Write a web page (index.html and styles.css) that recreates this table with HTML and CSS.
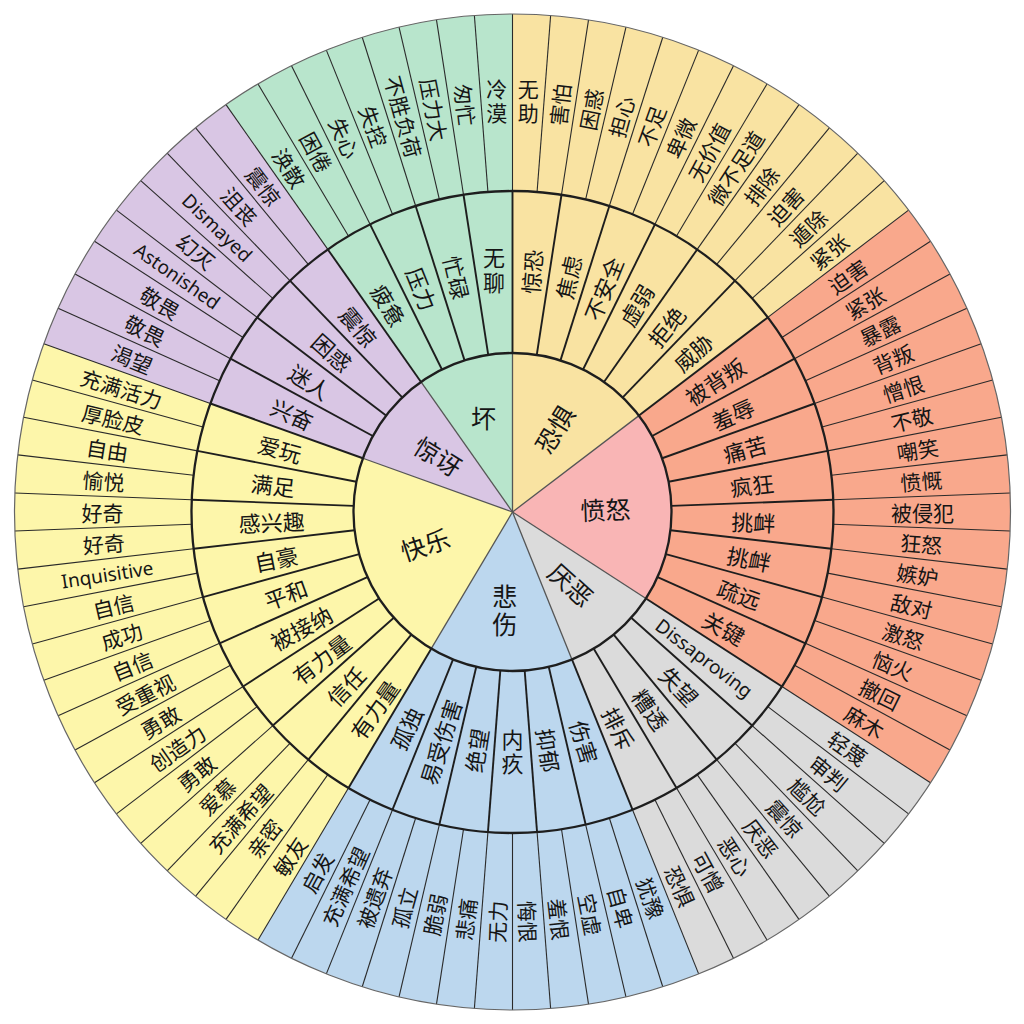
FILE: index.html
```html
<!DOCTYPE html>
<html lang="zh-CN">
<head>
<meta charset="utf-8">
<title>情绪轮</title>
<link rel="stylesheet" href="styles.css">
</head>
<body>
<main class="page">
  <svg id="wheel" class="wheel" viewBox="0 0 1024 1024" width="1024" height="1024" xmlns="http://www.w3.org/2000/svg">
    <g id="fills"></g>
    <g id="lines"></g>
    <g id="labels"></g>
  </svg>
</main>
<script src="script.js"></script>
</body>
</html>
```

FILE: styles.css
```css
html, body {
  margin: 0;
  padding: 0;
  background: #ffffff;
}
.page {
  width: 1024px;
  height: 1024px;
  display: block;
}
.wheel {
  display: block;
}
.c-fear { fill: #f9e3a2; }
.c-anger { fill: #f9a88c; }
.c-anger-core { fill: #f9b5b5; }
.c-disgust { fill: #dbdbdb; }
.c-sad { fill: #bcd7ee; }
.c-happy { fill: #fdf6aa; }
.c-surprise { fill: #d9c6e4; }
.c-bad { fill: #b8e5cc; }

.ln-outer { stroke: #2a2a2a; stroke-width: 1.1; }
.ln-mid { stroke: #1e1e1e; stroke-width: 1.9; }
.ln-core { stroke: #555; stroke-width: 1.3; }
.ring { fill: none; stroke: #1e1e1e; stroke-width: 2.3; }
.rim { fill: none; stroke: #666; stroke-width: 1.2; }

.lbl {
  font-family: "Noto Sans CJK SC", "Noto Sans", sans-serif;
  fill: #151515;
  text-anchor: middle;
  dominant-baseline: central;
}
.lbl-outer { font-size: 21px; }
.lbl-mid { font-size: 22px; }
.lbl-core { font-size: 25px; }
.latin {
  font-family: "Noto Sans", "Open Sans", sans-serif;
  font-size: 19px;
}
.vert {
  writing-mode: vertical-rl;
  text-orientation: upright;
  letter-spacing: 0.12em;
}
```

FILE: script.js
```js
(function () {
  var NS = 'http://www.w3.org/2000/svg';
  var cx = 512.5, cy = 512, R0 = 498, R1 = 321, R2 = 159, N = 82, SEG = 360 / N;

  var cores = [
    { name: '恐惧', cls: 'fear', n: 12, rot: -58,
      mid: ['惊恐', '焦虑', '不安全', '虚弱', '拒绝', '威胁'],
      outer: ['无助', '害怕', '困惑', '担心', '不足', '卑微', '无价值', '微不足道', '排除', '迫害', '遁除', '紧张'] },
    { name: '愤怒', cls: 'anger', core: 'anger-core', n: 16, rot: -2,
      mid: ['被背叛', '羞辱', '痛苦', '疯狂', '挑衅', '挑衅', '疏远', '关键'],
      outer: ['迫害', '紧张', '暴露', '背叛', '憎恨', '不敬', '嘲笑', '愤慨', '被侵犯', '狂怒', '嫉妒', '敌对', '激怒', '恼火', '撤回', '麻木'] },
    { name: '厌恶', cls: 'disgust', n: 8, rot: 42,
      mid: ['Dissaproving', '失望', '糟透', '排斥'],
      outer: ['轻蔑', '审判', '尴尬', '震惊', '厌恶', '恶心', '可憎', '恐惧'] },
    { name: '悲伤', cls: 'sad', n: 12, stack: true, r: 100,
      mid: ['伤害', '抑郁', '内疚', '绝望', '易受伤害', '孤独'],
      outer: ['犹豫', '自卑', '空虚', '羞恨', '悔恨', '无力', '悲痛', '脆弱', '孤立', '被遗弃', '充满希望', '启发'] },
    { name: '快乐', cls: 'happy', n: 18, rot: -18,
      mid: ['有力量', '信任', '有力量', '被接纳', '平和', '自豪', '感兴趣', '满足', '爱玩'],
      outer: ['敏友', '亲密', '充满希望', '爱慕', '勇敢', '创造力', '勇敢', '受重视', '自信', '成功', '自信', 'Inquisitive', '好奇', '好奇', '愉悦', '自由', '厚脸皮', '充满活力'] },
    { name: '惊讶', cls: 'surprise', n: 8, rot: 32,
      mid: ['兴奋', '迷人', '困惑', '震惊'],
      outer: ['渴望', '敬畏', '敬畏', 'Astonished', '幻灭', 'Dismayed', '沮丧', '震惊'] },
    { name: '坏', cls: 'bad', n: 8, stack: true, r: 96,
      mid: ['疲惫', '压力', '忙碌', '无聊'],
      outer: ['涣散', '困倦', '失心', '失控', '不胜负荷', '压力大', '匆忙', '冷漠'] }
  ];

  var STACK = { '冷漠': 1, '无助': 1, '无聊': 1, '内疚': 1 };

  function pt(r, a) {
    var t = a * Math.PI / 180;
    return [cx + r * Math.sin(t), cy - r * Math.cos(t)];
  }
  function f(v) { return v.toFixed(2); }
  function wedge(r1, r2, a1, a2) {
    var p1 = pt(r2, a1), p2 = pt(r2, a2);
    var large = (a2 - a1) > 180 ? 1 : 0;
    var d = 'M' + f(p1[0]) + ' ' + f(p1[1]) + 'A' + r2 + ' ' + r2 + ' 0 ' + large + ' 1 ' + f(p2[0]) + ' ' + f(p2[1]);
    if (r1 > 0) {
      var p3 = pt(r1, a2), p4 = pt(r1, a1);
      d += 'L' + f(p3[0]) + ' ' + f(p3[1]) + 'A' + r1 + ' ' + r1 + ' 0 ' + large + ' 0 ' + f(p4[0]) + ' ' + f(p4[1]);
    } else {
      d += 'L' + cx + ' ' + cy;
    }
    return d + 'Z';
  }
  function el(tag, attrs, parent) {
    var e = document.createElementNS(NS, tag);
    for (var k in attrs) e.setAttribute(k, attrs[k]);
    parent.appendChild(e);
    return e;
  }

  var gF = document.getElementById('fills');
  var gL = document.getElementById('lines');
  var gT = document.getElementById('labels');

  function label(text, r, a, cls, stack, rotOverride) {
    var p = pt(r, a);
    var latin = /^[A-Za-z]/.test(text);
    var t = el('text', { 'class': 'lbl ' + cls + (latin ? ' latin' : '') + (stack ? ' vert' : '') }, gT);
    if (stack) {
      t.setAttribute('x', f(p[0]));
      t.setAttribute('y', f(p[1]));
    } else {
      var rot = (rotOverride !== undefined) ? rotOverride : (a < 180 ? a - 90 : a - 270);
      t.setAttribute('transform', 'translate(' + f(p[0]) + ' ' + f(p[1]) + ') rotate(' + f(rot) + ')');
    }
    t.textContent = text;
  }

  var start = 0;
  var boundaries = [];
  cores.forEach(function (c) {
    var a1 = start * SEG, a2 = (start + c.n) * SEG;
    boundaries.push(a1);
    el('path', { d: wedge(R1, R0, a1, a2), 'class': 'c-' + c.cls }, gF);
    el('path', { d: wedge(R2, R1, a1, a2), 'class': 'c-' + c.cls }, gF);
    el('path', { d: wedge(0, R2, a1, a2), 'class': 'c-' + (c.core || c.cls) }, gF);

    c.outer.forEach(function (txt, i) {
      label(txt, 410, (start + i + 0.5) * SEG, 'lbl-outer', !!STACK[txt]);
    });
    c.mid.forEach(function (txt, i) {
      label(txt, 241, (start + 2 * i + 1) * SEG, 'lbl-mid', !!STACK[txt]);
    });
    label(c.name, c.r || 93, (a1 + a2) / 2, 'lbl-core', !!c.stack, c.rot);
    start += c.n;
  });

  for (var k = 0; k < N; k++) {
    var a = k * SEG, p1 = pt(R1, a), p2 = pt(R0, a);
    el('line', { x1: f(p1[0]), y1: f(p1[1]), x2: f(p2[0]), y2: f(p2[1]), 'class': 'ln-outer' }, gL);
  }
  for (var m = 0; m < N / 2; m++) {
    var b = 2 * m * SEG, q1 = pt(R2, b), q2 = pt(R1, b);
    el('line', { x1: f(q1[0]), y1: f(q1[1]), x2: f(q2[0]), y2: f(q2[1]), 'class': 'ln-mid' }, gL);
  }
  boundaries.forEach(function (a) {
    var p = pt(R2, a);
    el('line', { x1: cx, y1: cy, x2: f(p[0]), y2: f(p[1]), 'class': 'ln-core' }, gL);
  });
  el('circle', { cx: cx, cy: cy, r: R2, 'class': 'ring' }, gL);
  el('circle', { cx: cx, cy: cy, r: R1, 'class': 'ring' }, gL);
  el('circle', { cx: cx, cy: cy, r: R0, 'class': 'rim' }, gL);
})();
```
